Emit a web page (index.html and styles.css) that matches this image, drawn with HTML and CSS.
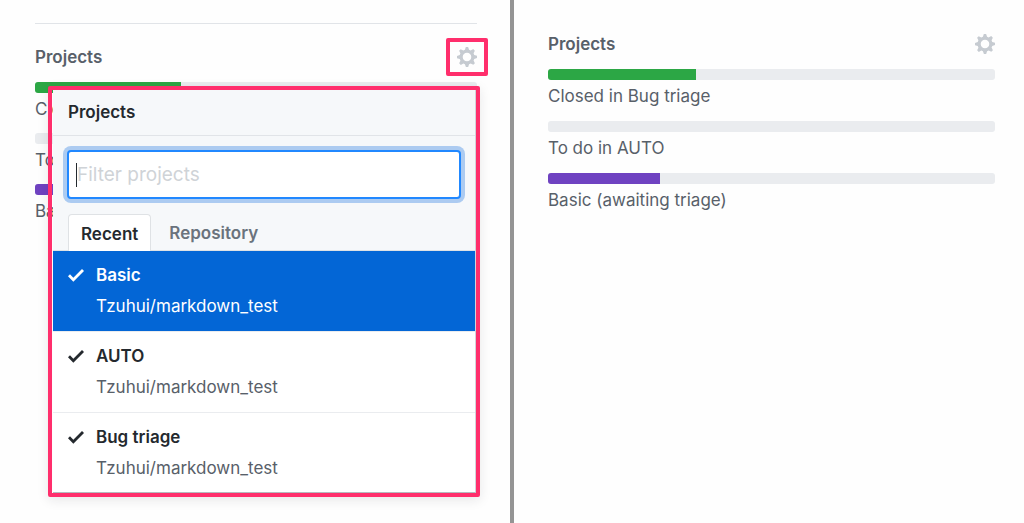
FILE: index.html
```html
<!DOCTYPE html>
<html lang="en">
<head>
  <meta charset="UTF-8">
  <title>Projects</title>
  <link rel="stylesheet" href="styles.css">
</head>
<body>

<!-- Shared icons -->
<svg class="sprite" aria-hidden="true">
  <symbol id="gear" viewBox="0 1 14 14">
    <path fill-rule="evenodd" d="M14 8.77v-1.6l-1.94-.64-.45-1.09.88-1.84-1.13-1.13-1.81.91-1.09-.45-.69-1.92h-1.6l-.63 1.94-1.11.45-1.84-.88-1.13 1.13.91 1.81-.45 1.09L0 7.23v1.59l1.94.64.45 1.09-.88 1.84 1.13 1.13 1.81-.91 1.09.45.69 1.92h1.59l.63-1.94 1.11-.45 1.84.88 1.13-1.13-.92-1.81.47-1.09L14 8.75v.02zM7 11c-1.66 0-3-1.34-3-3s1.34-3 3-3 3 1.34 3 3-1.34 3-3 3z"/>
  </symbol>
  <symbol id="check" viewBox="0 2 12 12">
    <path d="M12 5l-8 8-4-4 1.5-1.5L4 10l6.5-6.5L12 5z"/>
  </symbol>
</svg>

<div class="compare">

  <!-- Menu open -->
  <section class="pane pane-open">
    <div class="sidebar">
      <div class="sidebar-head">
        <h2>Projects</h2>
        <button class="gear-btn marked" aria-label="Edit projects"><svg><use href="#gear"/></svg></button>
      </div>
      <ul class="progress-list">
        <li><div class="bar"><span class="green" style="width: 33%"></span></div>Closed in Bug triage</li>
        <li><div class="bar"></div>To do in AUTO</li>
        <li><div class="bar"><span class="purple" style="width: 25%"></span></div>Basic (awaiting triage)</li>
      </ul>

      <div class="menu">
        <div class="menu-inner">
          <h3 class="menu-title">Projects</h3>
          <div class="menu-filter">
            <input type="text" placeholder="Filter projects" aria-label="Filter projects">
            <span class="caret"></span>
          </div>
          <div class="tabs">
            <button class="tab selected">Recent</button>
            <button class="tab">Repository</button>
          </div>
          <div class="menu-list">
            <button class="item active">
              <svg><use href="#check"/></svg>
              <span class="item-text"><b>Basic</b><span>Tzuhui/markdown_test</span></span>
            </button>
            <button class="item">
              <svg><use href="#check"/></svg>
              <span class="item-text"><b>AUTO</b><span>Tzuhui/markdown_test</span></span>
            </button>
            <button class="item">
              <svg><use href="#check"/></svg>
              <span class="item-text"><b>Bug triage</b><span>Tzuhui/markdown_test</span></span>
            </button>
          </div>
        </div>
      </div>
    </div>
  </section>

  <!-- Menu closed -->
  <section class="pane pane-closed">
    <div class="sidebar">
      <div class="sidebar-head">
        <h2>Projects</h2>
        <button class="gear-btn" aria-label="Edit projects"><svg><use href="#gear"/></svg></button>
      </div>
      <ul class="progress-list">
        <li><div class="bar"><span class="green" style="width: 33%"></span></div>Closed in Bug triage</li>
        <li><div class="bar"></div>To do in AUTO</li>
        <li><div class="bar"><span class="purple" style="width: 25%"></span></div>Basic (awaiting triage)</li>
      </ul>
    </div>
  </section>

</div>

</body>
</html>
```
FILE: styles.css
```css
* {
  box-sizing: border-box;
}

body {
  margin: 0;
  font-family: Inter, "Liberation Sans", sans-serif;
  font-size: 17px;
  line-height: 24px;
  color: #586069;
  background-color: #fefefe;
}

h2, h3, ul {
  margin: 0;
  padding: 0;
  font-size: 17px;
}

h2, h3, b {
  font-weight: 600;
}

button {
  font: inherit;
  color: inherit;
  background: none;
  border: none;
  padding: 0;
  cursor: pointer;
}

.sprite {
  position: absolute;
  width: 0;
  height: 0;
}

/* Two panes side by side */
.compare {
  display: grid;
  grid-template-columns: 257fr 255fr;
  min-height: 100vh;
}

.pane-open {
  padding: 23px 33px 0 35px;
  border-right: 4px solid #949494;
}

.pane-closed {
  padding: 11px 29px 0 34px;
}

/* Sidebar */
.sidebar {
  position: relative;
}

.pane-open .sidebar {
  border-top: 1px solid #e1e4e8;
}

.sidebar-head {
  display: flex;
  justify-content: space-between;
  align-items: center;
  height: 58px;
  padding-top: 8px;
}

.gear-btn {
  display: flex;
}

.gear-btn svg {
  width: 20px;
  height: 20px;
  fill: #c6cbd1;
}

.marked {
  padding: 5px 7px;
  margin-right: -11px;
  border: 4px solid #ff2e6c;
  border-radius: 2px;
}

.progress-list {
  list-style: none;
}

.progress-list li {
  margin-bottom: 13px;
}

.pane-open .progress-list li {
  margin-bottom: 12px;
}

.bar {
  display: flex;
  height: 11px;
  margin-bottom: 4px;
  border-radius: 3px;
  overflow: hidden;
  background-color: #eaecef;
}

.green {
  background-color: #2ca745;
}

.purple {
  background-color: #6f42c1;
}

/* Menu over the sidebar */
.menu {
  position: absolute;
  top: 62px;
  left: 13px;
  right: -3px;
  border: 4px solid #ff2e6c;
  border-radius: 2px;
  box-shadow: 0 3px 12px rgba(27, 31, 35, 0.1);
}

.menu-inner {
  margin-left: 1px;
  background-color: #f6f8fa;
  border-right: 1px solid #d1d5da;
  border-bottom: 1px solid #b5babf;
}

.menu-title {
  padding: 10px 15px 11px;
  color: #24292e;
  border-bottom: 1px solid #e1e4e8;
}

.menu-filter {
  position: relative;
  padding: 14px 14px 15px;
}

.menu-filter input {
  display: block;
  width: 100%;
  height: 49px;
  padding: 0 8px;
  font: inherit;
  font-size: 19px;
  border: 2px solid #2188ff;
  border-radius: 4px;
  box-shadow: 0 0 0 4px #accbf1;
  outline: none;
}

.menu-filter input::placeholder {
  color: #cfd3d7;
}

/* Text cursor */
.caret {
  position: absolute;
  top: 27px;
  left: 23px;
  width: 1px;
  height: 24px;
  background-color: #24292e;
}

.tabs {
  display: flex;
  padding: 0 15px;
  border-bottom: 1px solid #dfe2e5;
}

.tab {
  height: 36px;
  padding: 2px 18px 0;
  font-weight: 600;
  color: #6a737d;
}

.tab.selected {
  padding: 2px 12px 0;
  margin-bottom: -1px;
  height: 37px;
  color: #24292e;
  background-color: #fff;
  border: 1px solid #dfe2e5;
  border-bottom: none;
  border-radius: 4px 4px 0 0;
}

.item {
  display: flex;
  width: 100%;
  gap: 12px;
  padding: 12px 15px 13px;
  text-align: left;
  background-color: #fff;
  border-bottom: 1px solid #eaecef;
}

.item:last-child {
  padding-bottom: 12px;
  border-bottom: none;
}

.item svg {
  width: 16px;
  height: 24px;
  fill: #24292e;
}

.item-text {
  display: flex;
  flex-direction: column;
  gap: 7px;
}

.item b {
  color: #24292e;
}

.item.active {
  background-color: #0366d6;
}

.item.active, .item.active b {
  color: #fff;
}

.item.active svg {
  fill: #fff;
}
```
